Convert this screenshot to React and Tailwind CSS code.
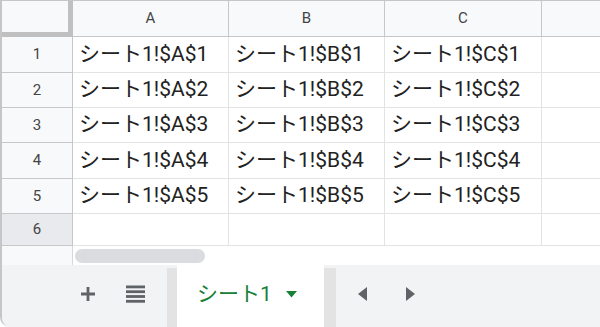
import React from 'react';

const cols = ['A', 'B', 'C'];
const rows = [
  { n: 1, h: 'h-[36px]' },
  { n: 2, h: 'h-[35px]' },
  { n: 3, h: 'h-[35px]' },
  { n: 4, h: 'h-[36px]' },
  { n: 5, h: 'h-[35px]' },
];

const font = { fontFamily: 'Roboto, "Noto Sans CJK JP", sans-serif' };

export default function App() {
  return (
    <div
      className="w-[600px] h-[327px] overflow-hidden bg-white border-l-2 border-t border-[#c6c6c6] rounded-bl-[10px] flex flex-col"
      style={font}
    >
      {/* Grid */}
      <div className="grid grid-cols-[71px_156px_156px_157px_1fr]">
        {/* Header row */}
        <div className="h-[36px] bg-[#f8f9fa] border-r-[5px] border-b-[5px] border-[#c0c0c0]" />
        {cols.map(c => (
          <div
            key={c}
            className="h-[36px] bg-[#f8f9fa] border-r border-b border-[#c7c7c7] flex items-center justify-center text-[15px] text-[#444]"
          >
            {c}
          </div>
        ))}
        <div className="h-[36px] bg-[#f8f9fa] border-b border-[#c7c7c7]" />

        {/* Body rows */}
        {rows.map(({ n, h }) => (
          <React.Fragment key={n}>
            <div className={`${h} bg-[#f8f9fa] border-r border-b border-[#c7c7c7] flex items-center justify-center text-[15px] text-[#444]`}>
              {n}
            </div>
            {cols.map(c => (
              <div
                key={c}
                className={`${h} border-r border-b border-[#e2e3e3] flex items-center pl-[6px] text-[21px] text-[#222] whitespace-nowrap overflow-hidden`}
              >
                シート1!${c}${n}
              </div>
            ))}
            <div className={`${h} border-b border-[#e2e3e3]`} />
          </React.Fragment>
        ))}

        {/* Row 6 (selected header) */}
        <div className="h-[32px] bg-[#e8eaed] border-r border-b border-[#c7c7c7] flex items-center justify-center text-[15px] text-[#444]">
          6
        </div>
        {cols.map(c => (
          <div key={c} className="h-[32px] border-r border-b border-[#e2e3e3]" />
        ))}
        <div className="h-[32px] border-b border-[#e2e3e3]" />
      </div>

      {/* Scrollbar row */}
      <div className="flex h-[19px]">
        <div className="w-[71px] bg-[#f8f9fa] border-r border-[#d8d8d8]" />
        <div className="flex-1 pt-[3px] pl-[2px]">
          <div className="w-[130px] h-[14px] rounded-full bg-[#dadce0]" />
        </div>
      </div>

      {/* Bottom bar */}
      <div className="flex-1 bg-[#f1f3f4] flex">
        <div className="w-[165px] flex items-center pl-[78px] gap-[30px] pb-[4px]">
          <svg width="16" height="16" viewBox="0 0 16 16">
            <path d="M8 1v14M1 8h14" stroke="#5f6368" strokeWidth="2.8" />
          </svg>
          <svg width="19" height="18" viewBox="0 0 19 18">
            <rect x="0" y="0.5" width="19" height="2.8" fill="#5f6368" />
            <rect x="0" y="5.3" width="19" height="2.8" fill="#5f6368" />
            <rect x="0" y="10.1" width="19" height="2.8" fill="#5f6368" />
            <rect x="0" y="14.9" width="19" height="2.8" fill="#5f6368" />
          </svg>
        </div>
        <div className="w-[10px] mt-[3px] bg-[#e3e3e3]" />
        <div className="w-[147px] bg-white flex items-center pl-[20px] pb-[4px] gap-[14px]">
          <span className="text-[21px] text-[#188038] leading-none">シート1</span>
          <svg width="11" height="7" viewBox="0 0 11 7">
            <path d="M0 0h11L5.5 6.5z" fill="#188038" />
          </svg>
        </div>
        <div className="w-[12px] mt-[3px] bg-[#e3e3e3]" />
        <div className="flex items-center pl-[22px] gap-[39px] pb-[4px]">
          <svg width="9" height="14" viewBox="0 0 9 14">
            <path d="M9 0v14L0 7z" fill="#5f6368" />
          </svg>
          <svg width="9" height="14" viewBox="0 0 9 14">
            <path d="M0 0v14l9-7z" fill="#5f6368" />
          </svg>
        </div>
      </div>
    </div>
  );
}
